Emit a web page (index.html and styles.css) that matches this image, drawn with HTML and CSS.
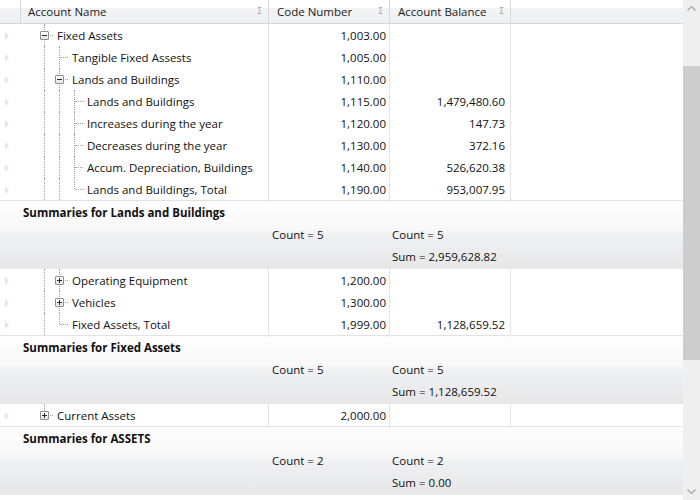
FILE: index.html
```html
<!DOCTYPE html>
<html>
<head>
<meta charset="utf-8">
<link rel="stylesheet" href="styles.css">
</head>
<body>
<div class="grid">
  <div class="main">
    <div class="hdr">
      <div class="hc ind"></div>
      <div class="hc"><span>Account Name</span><span class="sig">Σ</span></div>
      <div class="hc"><span>Code Number</span><span class="sig">Σ</span></div>
      <div class="hc"><span>Account Balance</span><span class="sig">Σ</span></div>
      <div class="hc fill"></div>
    </div>

    <div class="row">
      <div class="ind"><span class="tri"></span></div>
      <div class="name"><span class="lv"></span><span class="lv node tee"><span class="exp minus"></span></span><span class="txt">Fixed Assets</span></div>
      <div class="num">1,003.00</div><div class="num bal"></div><div class="fill"></div>
    </div>
    <div class="row">
      <div class="ind"><span class="tri"></span></div>
      <div class="name"><span class="lv"></span><span class="lv ln"></span><span class="lv node tee leaf"></span><span class="txt">Tangible Fixed Assests</span></div>
      <div class="num">1,005.00</div><div class="num bal"></div><div class="fill"></div>
    </div>
    <div class="row">
      <div class="ind"><span class="tri"></span></div>
      <div class="name"><span class="lv"></span><span class="lv ln"></span><span class="lv node tee"><span class="exp minus"></span></span><span class="txt">Lands and Buildings</span></div>
      <div class="num">1,110.00</div><div class="num bal"></div><div class="fill"></div>
    </div>
    <div class="row">
      <div class="ind"><span class="tri"></span></div>
      <div class="name"><span class="lv"></span><span class="lv ln"></span><span class="lv ln"></span><span class="lv node tee leaf"></span><span class="txt">Lands and Buildings</span></div>
      <div class="num">1,115.00</div><div class="num bal">1,479,480.60</div><div class="fill"></div>
    </div>
    <div class="row">
      <div class="ind"><span class="tri"></span></div>
      <div class="name"><span class="lv"></span><span class="lv ln"></span><span class="lv ln"></span><span class="lv node tee leaf"></span><span class="txt">Increases during the year</span></div>
      <div class="num">1,120.00</div><div class="num bal">147.73</div><div class="fill"></div>
    </div>
    <div class="row">
      <div class="ind"><span class="tri"></span></div>
      <div class="name"><span class="lv"></span><span class="lv ln"></span><span class="lv ln"></span><span class="lv node tee leaf"></span><span class="txt">Decreases during the year</span></div>
      <div class="num">1,130.00</div><div class="num bal">372.16</div><div class="fill"></div>
    </div>
    <div class="row">
      <div class="ind"><span class="tri"></span></div>
      <div class="name"><span class="lv"></span><span class="lv ln"></span><span class="lv ln"></span><span class="lv node tee leaf"></span><span class="txt">Accum. Depreciation, Buildings</span></div>
      <div class="num">1,140.00</div><div class="num bal">526,620.38</div><div class="fill"></div>
    </div>
    <div class="row">
      <div class="ind"><span class="tri"></span></div>
      <div class="name"><span class="lv"></span><span class="lv ln"></span><span class="lv ln"></span><span class="lv node end leaf"></span><span class="txt">Lands and Buildings, Total</span></div>
      <div class="num">1,190.00</div><div class="num bal">953,007.95</div><div class="fill"></div>
    </div>

    <div class="sum">
      <div class="sum-title">Summaries for Lands and Buildings</div>
      <div class="sum-line"><span></span><span class="sc">Count = 5</span><span class="sbal">Count = 5</span></div>
      <div class="sum-line"><span></span><span class="sc"></span><span class="sbal">Sum = 2,959,628.82</span></div>
    </div>

    <div class="row">
      <div class="ind"><span class="tri"></span></div>
      <div class="name"><span class="lv"></span><span class="lv ln"></span><span class="lv node tee"><span class="exp plus"></span></span><span class="txt">Operating Equipment</span></div>
      <div class="num">1,200.00</div><div class="num bal"></div><div class="fill"></div>
    </div>
    <div class="row">
      <div class="ind"><span class="tri"></span></div>
      <div class="name"><span class="lv"></span><span class="lv ln"></span><span class="lv node tee"><span class="exp plus"></span></span><span class="txt">Vehicles</span></div>
      <div class="num">1,300.00</div><div class="num bal"></div><div class="fill"></div>
    </div>
    <div class="row">
      <div class="ind"><span class="tri"></span></div>
      <div class="name"><span class="lv"></span><span class="lv ln"></span><span class="lv node end leaf"></span><span class="txt">Fixed Assets, Total</span></div>
      <div class="num">1,999.00</div><div class="num bal">1,128,659.52</div><div class="fill"></div>
    </div>

    <div class="sum">
      <div class="sum-title">Summaries for Fixed Assets</div>
      <div class="sum-line"><span></span><span class="sc">Count = 5</span><span class="sbal">Count = 5</span></div>
      <div class="sum-line"><span></span><span class="sc"></span><span class="sbal">Sum = 1,128,659.52</span></div>
    </div>

    <div class="row">
      <div class="ind"><span class="tri"></span></div>
      <div class="name"><span class="lv"></span><span class="lv node end"><span class="exp plus"></span></span><span class="txt">Current Assets</span></div>
      <div class="num">2,000.00</div><div class="num bal"></div><div class="fill"></div>
    </div>

    <div class="sum">
      <div class="sum-title">Summaries for ASSETS</div>
      <div class="sum-line"><span></span><span class="sc">Count = 2</span><span class="sbal">Count = 2</span></div>
      <div class="sum-line"><span></span><span class="sc"></span><span class="sbal">Sum = 0.00</span></div>
    </div>
  </div>

  <div class="sbar">
    <div class="sb-btn"><svg width="17" height="17" viewBox="0 0 17 17"><polyline points="4.5,10.5 8.5,6.5 12.5,10.5" fill="none" stroke="#a3a3a3" stroke-width="1.2"/></svg></div>
    <div class="sb-track"><div class="thumb"></div></div>
    <div class="sb-btn"><svg width="17" height="17" viewBox="0 0 17 17"><polyline points="4.5,6.5 8.5,10.5 12.5,6.5" fill="none" stroke="#a3a3a3" stroke-width="1.2"/></svg></div>
  </div>
</div>
</body>
</html>
```

FILE: styles.css
```css
html, body {
  margin: 0;
  padding: 0;
  background: #ffffff;
}

body {
  font-family: "Open Sans", "Liberation Sans", sans-serif;
  font-size: 11.5px;
  color: #111111;
}

.grid {
  display: flex;
  width: 700px;
  height: 500px;
  overflow: hidden;
}

.main {
  flex: 1;
  min-width: 0;
  overflow: hidden;
}

/* header */
.hdr {
  display: grid;
  grid-template-columns: 21px 248px 121px 121px 1fr;
  height: 24px;
  box-sizing: border-box;
  border-bottom: 1px solid #d6d6d6;
  background: linear-gradient(to bottom, #ffffff 0, #ffffff 8px, #f2f3f5 8px, #eef0f2 23px);
}

.hc {
  display: flex;
  align-items: center;
  justify-content: space-between;
  padding: 0 6px 0 8px;
  border-right: 1px solid #d8d8d8;
  line-height: 23px;
  color: #1b1b1b;
  white-space: nowrap;
}

.hc:nth-child(2) {
  padding-left: 7px;
}

.hc.ind {
  padding: 0;
}

.hc.fill {
  border-right: none;
}

.sig {
  font-size: 8px;
  color: #a4a9b0;
  font-family: "DejaVu Sans", sans-serif;
}

/* data rows */
.row {
  display: grid;
  grid-template-columns: 21px 248px 121px 121px 1fr;
  height: 22px;
  line-height: 24px;
  background: #ffffff;
}

.ind {
  display: flex;
  align-items: center;
  padding-left: 5px;
}

.tri {
  width: 0;
  height: 0;
  border-left: 4px solid #e6e6e6;
  border-top: 4px solid transparent;
  border-bottom: 4px solid transparent;
}

.name {
  display: flex;
  padding-left: 1px;
  border-right: 1px solid #e4e4e4;
  white-space: nowrap;
  overflow: hidden;
}

.lv {
  flex: none;
  width: 15px;
  height: 22px;
  position: relative;
}

.lv.ln::before,
.node.tee::before {
  content: "";
  position: absolute;
  left: 7px;
  top: 0;
  bottom: 0;
  border-left: 1px dotted #a0a0a0;
}

.node.end::before {
  content: "";
  position: absolute;
  left: 7px;
  top: 0;
  height: 11px;
  border-left: 1px dotted #a0a0a0;
}

.node::after {
  content: "";
  position: absolute;
  left: 8px;
  top: 11px;
  width: 8px;
  border-top: 1px dotted #a0a0a0;
}

.exp {
  position: absolute;
  left: 3px;
  top: 7px;
  width: 9px;
  height: 9px;
  box-sizing: border-box;
  border: 1px solid #8f8f8f;
  border-radius: 1px;
  background: linear-gradient(to bottom, #ffffff, #e4e4e4);
  z-index: 1;
}

.exp::before {
  content: "";
  position: absolute;
  left: 1px;
  top: 3px;
  width: 5px;
  height: 1px;
  background: #2a2a2a;
}

.exp.plus::after {
  content: "";
  position: absolute;
  left: 3px;
  top: 1px;
  width: 1px;
  height: 5px;
  background: #2a2a2a;
}

.txt {
  padding-left: 5px;
}

.num {
  text-align: right;
  padding-right: 3px;
  border-right: 1px solid #e4e4e4;
  white-space: nowrap;
}

.num.bal {
  padding-right: 5px;
}

/* summary blocks */
.sum {
  border-top: 1px solid #e2e2e2;
  padding-bottom: 1px;
  background: linear-gradient(to bottom, #fefefe 0%, #f8f8f9 42%, #eff0f2 52%, #e7e7e8 100%);
}

.sum-title {
  height: 22px;
  line-height: 24px;
  padding-left: 23px;
  font-weight: bold;
  color: #111111;
  margin-bottom: 1px;
  overflow: hidden;
}

.sum-line {
  display: grid;
  grid-template-columns: 269px 121px 1fr;
  height: 22px;
  line-height: 22px;
  white-space: nowrap;
}

.sc {
  padding-left: 3px;
}

.sbal {
  padding-left: 2px;
}

/* scrollbar */
.sbar {
  width: 17px;
  flex: none;
  display: flex;
  flex-direction: column;
  background: #efefef;
}

.sb-btn {
  height: 17px;
  flex: none;
}

.sb-btn svg {
  display: block;
}

.sb-track {
  flex: 1;
  padding-top: 49px;
}

.thumb {
  height: 294px;
  background: #cdcdcd;
}
```
